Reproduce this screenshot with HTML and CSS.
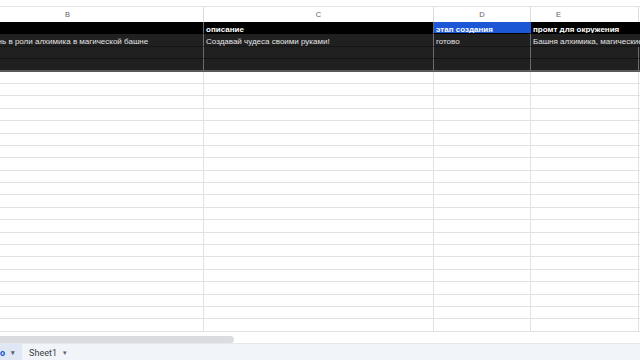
FILE: index.html
```html
<!DOCTYPE html>
<html lang="ru">
<head>
  <meta charset="UTF-8" />
  <meta name="viewport" content="width=device-width,initial-scale=1" />
  <title>Таблица – Google Sheets</title>
  <link rel="stylesheet" href="styles.css">
</head>
<body>
  <div class="sheet">
    <div class="topbar"></div>

    <div class="viewport">
      <div class="grid" id="grid">
        <div class="row letters">
          <div class="cell">B</div>
          <div class="cell">C</div>
          <div class="cell">D</div>
          <div class="cell col-e">E</div>
          <div class="cell"></div>
        </div>
        <div class="row title">
          <div class="cell"></div>
          <div class="cell">описание</div>
          <div class="cell blue">этап создания</div>
          <div class="cell wide">промт для окружения</div>
        </div>
        <div class="row dark">
          <div class="cell">Проведи один день в роли алхимика в магической башне</div>
          <div class="cell">Создавай чудеса своими руками!</div>
          <div class="cell">готово</div>
          <div class="cell wide">Башня алхимика, магические колбы и свитки</div>
        </div>
        <div class="row dark">
          <div class="cell"></div><div class="cell"></div><div class="cell"></div><div class="cell"></div><div class="cell"></div>
        </div>
        <div class="row dark">
          <div class="cell"></div><div class="cell"></div><div class="cell"></div><div class="cell"></div><div class="cell"></div>
        </div>
      </div>
    </div>

    <div class="hscroll"><div class="thumb"></div></div>

    <div class="tabs">
      <div class="tab active"><span>о</span><span class="caret">▾</span></div>
      <div class="tab"><span>Sheet1</span><span class="caret">▾</span></div>
    </div>
  </div>

  <script>
    // empty rows below the filled block
    const grid = document.getElementById("grid");
    for (let i = 0; i < 21; i++) {
      const row = document.createElement("div");
      row.className = "row";
      for (let c = 0; c < 5; c++) {
        const cell = document.createElement("div");
        cell.className = "cell";
        row.appendChild(cell);
      }
      grid.appendChild(row);
    }
  </script>
</body>
</html>
```

FILE: styles.css
```css
body {
  margin: 0;
  background: #fff;
  font-family: 'Liberation Sans', Arial, sans-serif;
}

.sheet {
  width: 640px;
  height: 360px;
  overflow: hidden;
  display: flex;
  flex-direction: column;
}

.topbar {
  height: 7px;
  flex: none;
  box-sizing: border-box;
  border-bottom: 1px solid #e3e3e3;
}

.viewport {
  height: 326px;
  flex: none;
  overflow: hidden;
}
.grid {
  display: grid;
  grid-template-columns: 272px 230px 97px 108px 100px;
  grid-template-rows: 15px;
  grid-auto-rows: 12.4px;
  margin-left: -68px;
}
.row {
  display: contents;
}
.cell {
  box-sizing: border-box;
  border-right: 1px solid #e2e2e2;
  border-bottom: 1px solid #e2e2e2;
  padding: 0 2px;
  font-size: 8px;
  line-height: 15px;
  white-space: nowrap;
  overflow: hidden;
  color: #000;
}
.cell.wide {
  grid-column: span 2;
}

.letters .cell {
  text-align: center;
  color: #5f6368;
  font-size: 7.5px;
  line-height: 15px;
  border-right-color: #dcdcdc;
  border-bottom: none;
}
.letters .col-e {
  padding-right: 54px;
}

.dark .cell {
  background: #202020;
  color: #e4e4e4;
  border-bottom-color: #141414;
  border-right-color: #6c6c6c;
}
.dark:nth-child(5) .cell {
  border-bottom: 2px solid #5a5a5a;
}
.title .cell {
  background: #000;
  color: #fff;
  font-weight: bold;
  border-bottom-color: #000;
  border-right-color: #6c6c6c;
}
.title .cell.blue {
  background: #1c58d6;
  border-right-color: #1c58d6;
}

.hscroll {
  height: 10px;
  flex: none;
  padding-top: 3px;
  box-sizing: border-box;
}
.thumb {
  width: 234px;
  height: 7px;
  background: #dadce0;
  border-radius: 0 4px 4px 0;
}

.tabs {
  flex: 1;
  display: flex;
  align-items: flex-start;
  background: #f1f4f9;
  border-top: 1px solid #e4e7ec;
}
.tab {
  display: flex;
  align-items: center;
  gap: 6px;
  height: 17px;
  padding: 0 9px 0 7px;
  font-family: Roboto, 'Liberation Sans', sans-serif;
  font-size: 9px;
  color: #3c4043;
}
.tab.active {
  background: #dfe7f5;
  color: #0b57d0;
  font-weight: bold;
  padding-left: 0;
  padding-right: 7px;
}
.caret {
  font-size: 7px;
  color: #5f6368;
}
```
